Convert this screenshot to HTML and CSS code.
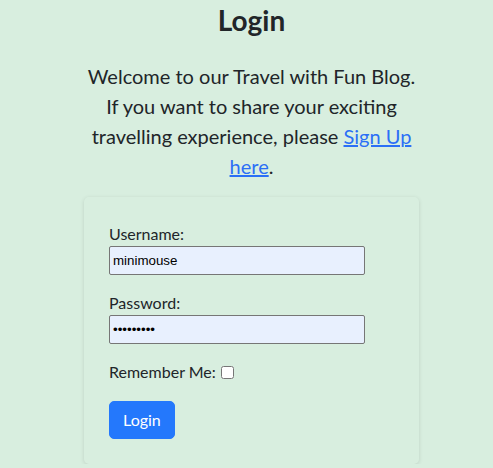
FILE: index.html
```html
<!DOCTYPE html>
<html>
<head>
<meta charset="utf-8">
<link rel="stylesheet" href="styles.css">
</head>
<body>
<main class="page">
  <h1 class="title">Login</h1>
  <p class="intro">Welcome to our Travel with Fun Blog. If you want to share your exciting travelling experience, please <a href="#" class="link">Sign Up here</a>.</p>
  <form class="card">
    <label class="label" for="u">Username:</label>
    <input class="field" id="u" type="text" value="minimouse">
    <label class="label" for="p">Password:</label>
    <input class="field" id="p" type="password" value="minimouse">
    <div class="remember"><label for="r">Remember Me:</label><input class="check" id="r" type="checkbox"></div>
    <button type="button" class="btn">Login</button>
  </form>
</main>
</body>
</html>
```
FILE: styles.css
```css
html, body { margin: 0; padding: 0; }
body {
  background: #d8eedf;
  color: #212529;
  font-family: "Lato", "Noto Sans", sans-serif;
  font-size: 16px;
  line-height: 1.5;
}
.page {
  width: 335px;
  margin: 0 auto;
  padding-left: 10px;
  padding-top: 3px;
  display: flex;
  flex-direction: column;
  align-items: stretch;
}
.title {
  margin: 0;
  text-align: center;
  font-size: 28px;
  font-weight: 700;
  line-height: 34px;
}
.intro {
  margin: 24px 0 16px;
  text-align: center;
  font-size: 20px;
  line-height: 30px;
  font-weight: 400;
}
.link { color: #2b6ff6; }
.card {
  display: flex;
  flex-direction: column;
  align-items: flex-start;
  padding: 25px 25px 25px 24px;
  box-shadow: 0 1px 4px rgba(0,0,0,0.12);
  border-radius: 5px;
}
.label { display: block; line-height: 24px; margin-left: 1px; }
.field {
  box-sizing: border-box;
  width: 256px;
  height: 29px;
  margin: 0 0 16px 1px;
  padding: 0 3px;
  border: 1px solid #767676;
  border-radius: 2px;
  background: #e8f0fe;
  font-family: "Liberation Sans", Arial, sans-serif;
  font-size: 13.33px;
  color: #000;
}
.remember { display: flex; align-items: center; line-height: 24px; margin: 0 0 17px 1px; }
.check { margin: 0 0 0 5px; width: 13px; height: 13px; }
.btn {
  margin-left: 1px;
  background: #2478fc;
  color: #fff;
  border: 1px solid #2478fc;
  border-radius: 5px;
  padding: 6px 13px;
  font-family: inherit;
  font-size: 16px;
  line-height: 24px;
}
```
